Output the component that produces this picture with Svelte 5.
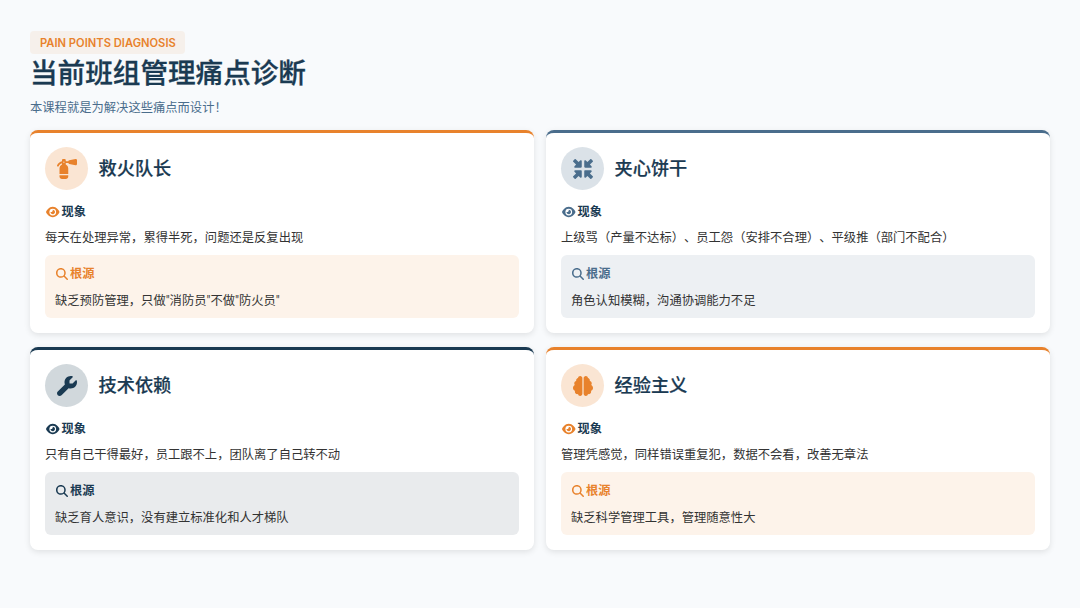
<script>
  const icons = {
    fire: 'M500.3 7.3C507.7 13.3 512 22.4 512 32v96c0 9.6-4.3 18.7-11.7 24.7s-17.2 8.5-26.6 6.6l-160-32C301.5 124.9 292 115.7 289 104H224v34.8c37.8 18 64 56.5 64 101.2V384H64V240c0-44.7 26.2-83.2 64-101.2V110c-36.2 11.1-66 36.9-82.3 70.5c-5.8 11.9-20.2 16.9-32.1 11.1s-16.9-20.2-11.1-32.1C26.7 109.8 72.7 72.6 128 60.4V32c0-17.7 14.3-32 32-32h32c17.7 0 32 14.3 32 32V56h65c3-11.7 12.5-20.9 24.7-23.4l160-32c9.4-1.9 19.1 .6 26.6 6.6zM288 416v32c0 35.3-28.7 64-64 64H128c-35.3 0-64-28.7-64-64V416H288zM176 96a16 16 0 1 0 0-32 16 16 0 1 0 0 32z',
    compress: 'M456 224H312c-13.3 0-24-10.7-24-24V56c0-9.7 5.8-18.5 14.8-22.2s19.3-1.7 26.2 5.2l40 40L442.3 5.7C446 2 450.9 0 456 0s10 2 13.7 5.7l36.7 36.7C510 46 512 50.9 512 56s-2 10-5.7 13.7L433 143l40 40c6.9 6.9 8.9 17.2 5.2 26.2s-12.5 14.8-22.2 14.8zm0 64c9.7 0 18.5 5.8 22.2 14.8s1.7 19.3-5.2 26.2l-40 40 73.4 73.4c3.6 3.6 5.7 8.6 5.7 13.7s-2 10-5.7 13.7l-36.7 36.7C466 510 461.1 512 456 512s-10-2-13.7-5.7L369 433l-40 40c-6.9 6.9-17.2 8.9-26.2 5.2s-14.8-12.5-14.8-22.2V312c0-13.3 10.7-24 24-24H456zm-256 0c13.3 0 24 10.7 24 24V456c0 9.7-5.8 18.5-14.8 22.2s-19.3 1.7-26.2-5.2l-40-40L69.7 506.3C66 510 61.1 512 56 512s-10-2-13.7-5.7L5.7 469.7C2 466 0 461.1 0 456s2-10 5.7-13.7L79 369 39 329c-6.9-6.9-8.9-17.2-5.2-26.2s12.5-14.8 22.2-14.8H200zM200 224H56c-9.7 0-18.5-5.8-22.2-14.8s-1.7-19.3 5.2-26.2l40-40L5.7 69.7C2 66 0 61.1 0 56s2-10 5.7-13.7L42.3 5.7C46 2 50.9 0 56 0s10 2 13.7 5.7L143 79l40-40c6.9-6.9 17.2-8.9 26.2-5.2s14.8 12.5 14.8 22.2V200c0 13.3-10.7 24-24 24z',
    wrench: 'M352 320c88.4 0 160-71.6 160-160c0-15.3-2.2-30.1-6.2-44.2c-3.1-10.8-16.4-13.2-24.3-5.3l-76.8 76.8c-3 3-7.1 4.7-11.3 4.7H336c-8.8 0-16-7.2-16-16V118.6c0-4.2 1.7-8.3 4.7-11.3l76.8-76.8c7.9-7.9 5.4-21.2-5.3-24.3C382.1 2.2 367.3 0 352 0C263.6 0 192 71.6 192 160c0 19.1 3.4 37.5 9.5 54.5L19.9 396.1C7.2 408.8 0 426.1 0 444.1C0 481.6 30.4 512 67.9 512c18 0 35.3-7.2 48-19.9L297.5 310.5c17 6.2 35.4 9.5 54.5 9.5z',
    brain: 'M184 0c30.9 0 56 25.1 56 56V456c0 30.9-25.1 56-56 56c-28.9 0-52.7-21.9-55.7-50.1c-5.2 1.4-10.7 2.1-16.3 2.1c-35.3 0-64-28.7-64-64c0-7.4 1.3-14.6 3.6-21.2C21.4 367.4 0 338.2 0 304c0-31.9 18.7-59.5 45.8-72.3C37.1 220.8 32 207 32 192c0-30.7 21.6-56.3 50.4-62.6C80.8 123.9 80 118 80 112c0-29.9 20.6-55.1 48.3-62.1C131.3 21.9 155.1 0 184 0zM328 0c28.9 0 52.6 21.9 55.7 49.9c27.8 7 48.3 32.1 48.3 62.1c0 6-.8 11.9-2.4 17.4c28.8 6.2 50.4 31.9 50.4 62.6c0 15-5.1 28.8-13.8 39.7C493.3 244.5 512 272.1 512 304c0 34.2-21.4 63.4-51.6 74.8c2.3 6.6 3.6 13.8 3.6 21.2c0 35.3-28.7 64-64 64c-5.6 0-11.1-.7-16.3-2.1c-3 28.2-26.8 50.1-55.7 50.1c-30.9 0-56-25.1-56-56V56c0-30.9 25.1-56 56-56z'
  };
  const eye = 'M288 32c-80.8 0-145.5 36.8-192.6 80.6C48.6 156 17.3 208 2.5 243.7c-3.3 7.9-3.3 16.7 0 24.6C17.3 304 48.6 356 95.4 399.4C142.5 443.2 207.2 480 288 480s145.5-36.8 192.6-80.6c46.8-43.5 78.1-95.4 93-131.1c3.3-7.9 3.3-16.7 0-24.6c-14.9-35.7-46.2-87.7-93-131.1C433.5 68.8 368.8 32 288 32zM144 256a144 144 0 1 1 288 0 144 144 0 1 1 -288 0zm144-64c0 35.3-28.7 64-64 64c-7.1 0-13.9-1.2-20.3-3.3c-5.5-1.8-11.9 1.6-11.7 7.4c.3 6.9 1.3 13.8 3.2 20.7c13.7 51.2 66.4 81.6 117.6 67.9s81.6-66.4 67.9-117.6c-11.1-41.5-47.8-69.4-88.6-71.1c-5.8-.2-9.2 6.1-7.4 11.7c2.1 6.4 3.3 13.2 3.3 20.3z';
  const search = 'M416 208c0 45.9-14.9 88.3-40 122.7L502.6 457.4c12.5 12.5 12.5 32.8 0 45.3s-32.8 12.5-45.3 0L330.7 376c-34.4 25.2-76.8 40-122.7 40C93.1 416 0 322.9 0 208S93.1 0 208 0S416 93.1 416 208zM208 352a144 144 0 1 0 0-288 144 144 0 1 0 0 288z';
  const cards = [
    { tone: 'orange', icon: 'fire', title: '救火队长', sign: '每天在处理异常，累得半死，问题还是反复出现', root: '缺乏预防管理，只做"消防员"不做"防火员"' },
    { tone: 'steel', icon: 'compress', title: '夹心饼干', sign: '上级骂（产量不达标）、员工怨（安排不合理）、平级推（部门不配合）', root: '角色认知模糊，沟通协调能力不足' },
    { tone: 'navy', icon: 'wrench', title: '技术依赖', sign: '只有自己干得最好，员工跟不上，团队离了自己转不动', root: '缺乏育人意识，没有建立标准化和人才梯队' },
    { tone: 'orange', icon: 'brain', title: '经验主义', sign: '管理凭感觉，同样错误重复犯，数据不会看，改善无章法', root: '缺乏科学管理工具，管理随意性大' }
  ];
</script>

<main class="page">
  <span class="tag">PAIN POINTS DIAGNOSIS</span>
  <h1>当前班组管理痛点诊断</h1>
  <p class="sub">本课程就是为解决这些痛点而设计！</p>
  <section class="grid">
    {#each cards as c}
      <article class="card {c.tone}">
        <header>
          <div class="circle">
            <svg class="big" viewBox="0 0 512 512"><path d={icons[c.icon]} /></svg>
          </div>
          <h2>{c.title}</h2>
        </header>
        <div class="label">
          <svg class="eye" viewBox="0 0 576 512"><path d={eye} /></svg><span>现象</span>
        </div>
        <p class="text">{c.sign}</p>
        <div class="root">
          <div class="rlabel">
            <svg class="search" viewBox="0 0 512 512"><path d={search} /></svg><span>根源</span>
          </div>
          <p class="text">{c.root}</p>
        </div>
      </article>
    {/each}
  </section>
</main>

<style>
  :global(body) {
    margin: 0;
    background: #f8fafc;
  }
  .page {
    width: 1080px;
    height: 608px;
    box-sizing: border-box;
    padding: 31px 30px 0;
    display: flex;
    flex-direction: column;
    align-items: flex-start;
    font-family: Roboto, "Noto Sans CJK SC", sans-serif;
    text-spacing-trim: space-all;
    background: #f8fafc;
    color: #333;
  }
  .tag {
    box-sizing: border-box;
    width: 155px;
    height: 23px;
    padding-left: 10px;
    display: flex;
    align-items: center;
    border-radius: 4px;
    background: rgba(230, 126, 34, 0.08);
    color: #e8822c;
    font-size: 11.2px;
    font-family: Inter, sans-serif;
    font-weight: 600;
    white-space: nowrap;
  }
  h1 {
    margin: 1px 0 0;
    font-size: 27.6px;
    line-height: 38px;
    font-weight: 500;
    -webkit-text-stroke: 0.3px #1a3a52;
    color: #1a3a52;
  }
  .sub {
    margin: 6px 0 0;
    font-size: 12.3px;
    line-height: 18px;
    color: #4a6d8c;
  }
  .grid {
    margin-top: 13px;
    width: 100%;
    display: grid;
    grid-template-columns: 1fr 1fr;
    column-gap: 12px;
    row-gap: 14px;
  }
  .card {
    box-sizing: border-box;
    height: 203px;
    padding: 14px 15px 15px;
    background: #fff;
    border-top: 3px solid var(--c);
    border-radius: 8px;
    box-shadow: 0 2px 6px rgba(0, 0, 0, 0.1);
  }
  .orange { --c: #e8822c; --soft: #fdf3ea; --circle: #fae5d3; }
  .steel { --c: #4a6d8c; --soft: #edf0f3; --circle: #dbe2e8; }
  .navy { --c: #1a3a52; --soft: #e9ebed; --circle: #d1d8dc; }
  header {
    display: flex;
    align-items: center;
    gap: 10.5px;
  }
  .circle {
    width: 43px;
    height: 43px;
    border-radius: 50%;
    background: var(--circle);
    display: flex;
    align-items: center;
    justify-content: center;
  }
  .big {
    width: 20px;
    height: 20px;
    fill: var(--c);
  }
  h2 {
    margin: 0;
    padding-bottom: 4px;
    font-size: 18.2px;
    font-weight: 500;
    -webkit-text-stroke: 0.2px #1a3a52;
    color: #1a3a52;
  }
  .label,
  .rlabel {
    display: flex;
    align-items: center;
    gap: 2px;
    font-size: 12.2px;
    line-height: 18px;
    font-weight: 700;
  }
  .label {
    margin-top: 13px;
    color: #1a3a52;
  }
  .rlabel {
    color: var(--c);
  }
  .eye {
    width: 13.5px;
    height: 12px;
    margin-left: 1px;
    fill: var(--c);
  }
  .search {
    width: 12px;
    height: 12px;
    margin-left: 1px;
    fill: var(--c);
  }
  .text {
    margin: 0;
    font-size: 12.3px;
    line-height: 18px;
    color: #333;
  }
  .label + .text {
    margin-top: 8px;
  }
  .root {
    margin-top: 8px;
    padding: 10px 10px 0;
    height: 63px;
    box-sizing: border-box;
    border-radius: 6px;
    background: var(--soft);
  }
  .root .text {
    margin-top: 9px;
  }
</style>
